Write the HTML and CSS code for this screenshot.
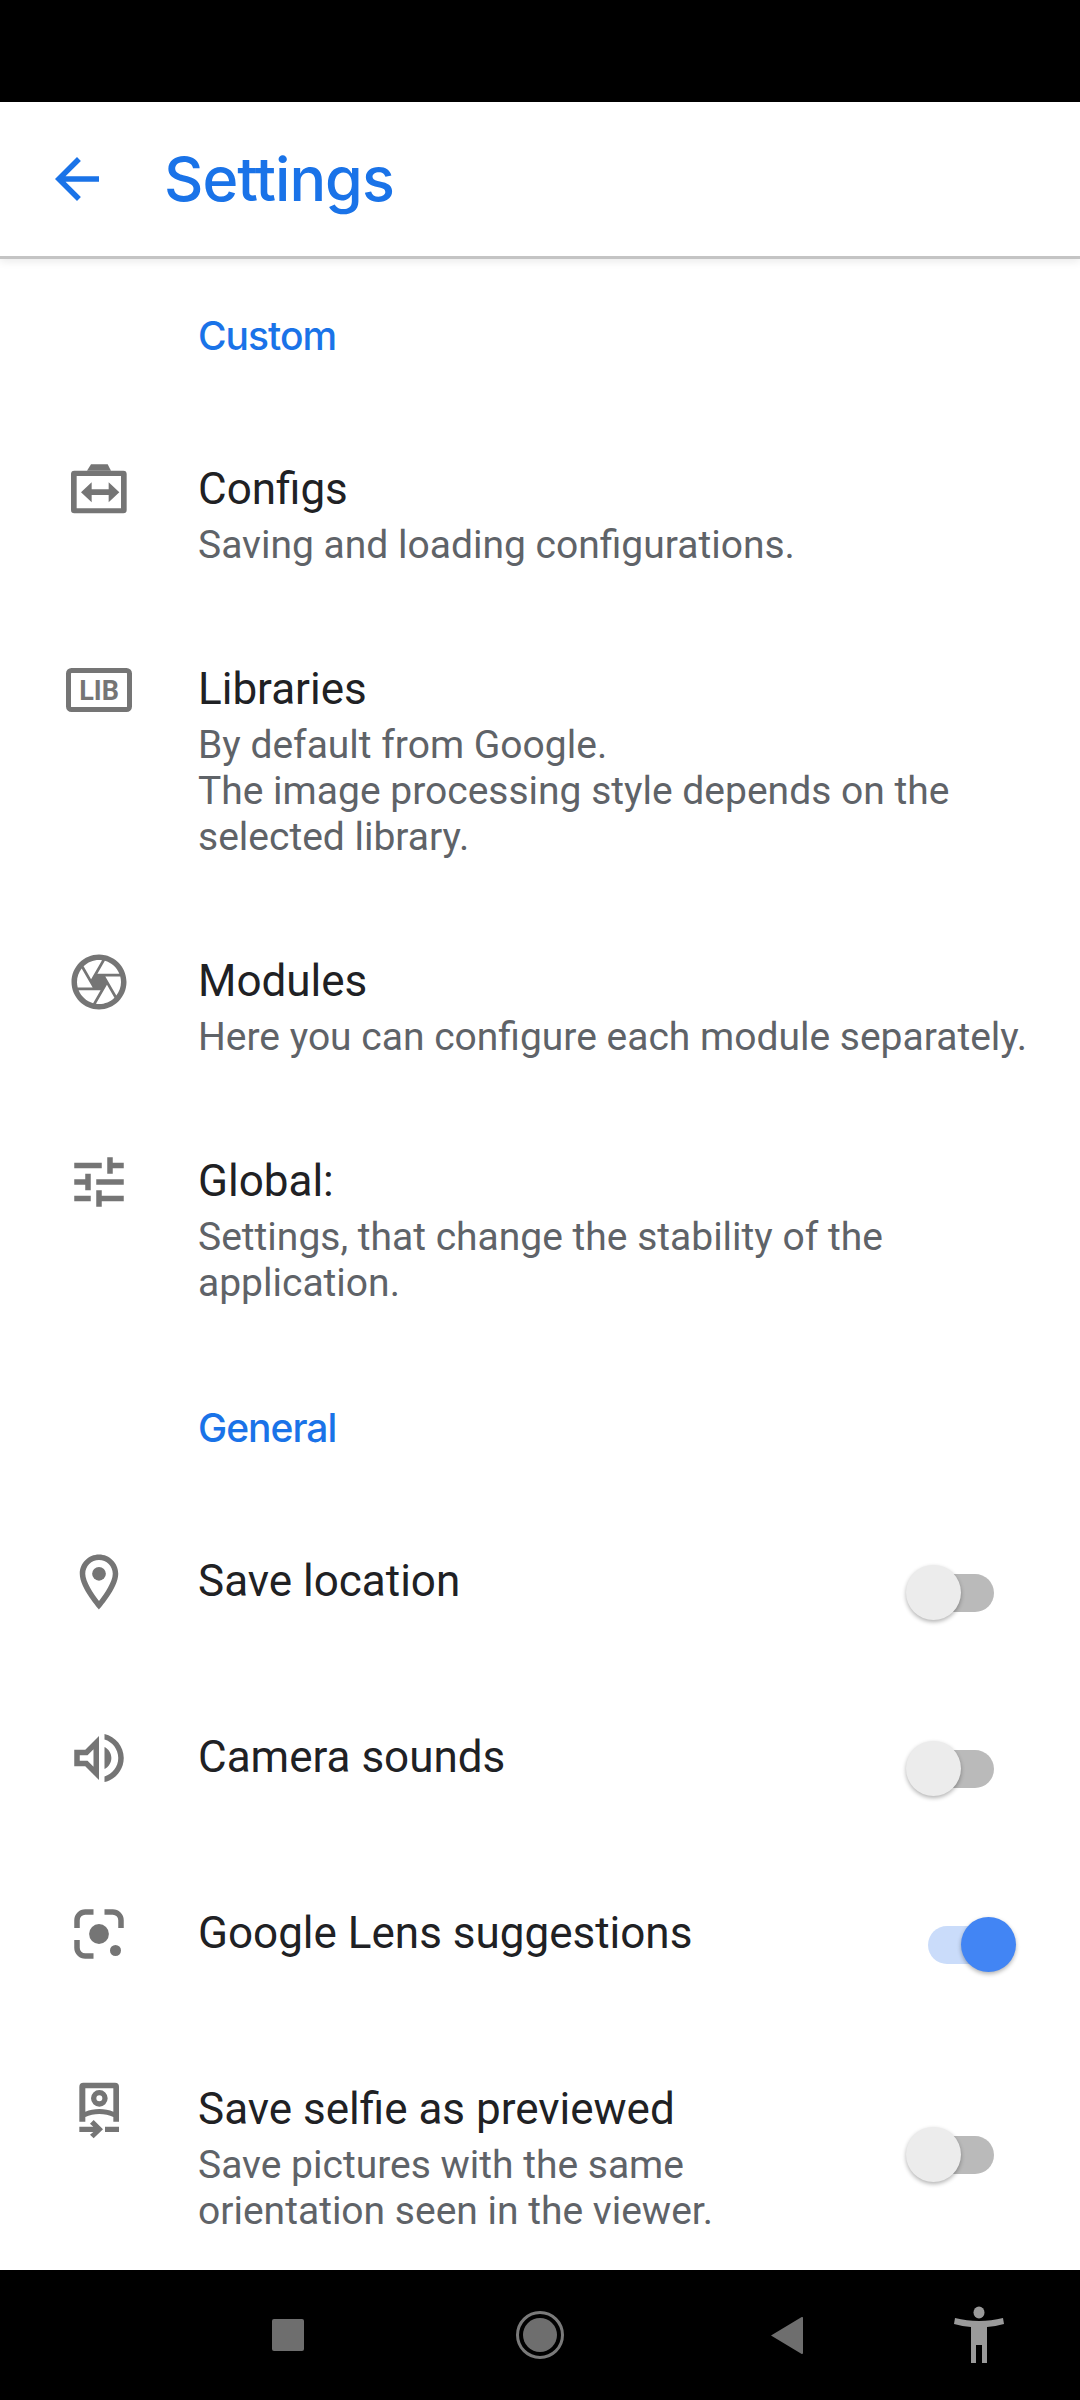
FILE: index.html
```html
<!DOCTYPE html>
<html lang="en">
  <head>
    <title>Settings</title>
    <link rel="stylesheet" href="styles.css">
  </head>
  <body>
    <div class="status-bar"></div>

    <header class="app-bar">
      <svg class="back-icon" viewBox="0 0 24 24">
        <path d="M20 11H7.83l5.59-5.59L12 4l-8 8 8 8 1.41-1.41L7.83 13H20v-2z"/>
      </svg>
      <p class="app-title">Settings</p>
    </header>

    <main class="settings">
      <p class="section-title section-custom">Custom</p>

      <!-- Configs -->
      <div class="row">
        <svg class="row-icon" viewBox="15 21 198 198">
          <path d="M78 62l12-19h50l10 19z"/>
          <path fill-rule="evenodd" d="M40 62h147a10 10 0 0 1 10 10v108a10 10 0 0 1-10 10H40a10 10 0 0 1-10-10V72a10 10 0 0 1 10-10zm7 16v97h133V78z"/>
          <path d="M60 127l32-30v21h51V97l32 30-32 30v-22H92v22z"/>
        </svg>
        <div class="row-text">
          <p class="row-title">Configs</p>
          <p class="row-sub">Saving and loading configurations.</p>
        </div>
      </div>

      <!-- Libraries -->
      <div class="row">
        <svg class="row-icon" viewBox="0 0 66 66">
          <rect x="2.500" y="13.500" width="61" height="39" rx="3" class="outline"/>
          <text x="33" y="42.500" text-anchor="middle" class="lib-text">LIB</text>
        </svg>
        <div class="row-text">
          <p class="row-title">Libraries</p>
          <p class="row-sub">By default from Google.<br>The image processing style depends on the selected library.</p>
        </div>
      </div>

      <!-- Modules -->
      <div class="row">
        <svg class="row-icon" viewBox="0 0 24 24">
          <path d="M14.25 2.26l-.08-.04-.01.02C13.46 2.09 12.74 2 12 2 6.48 2 2 6.48 2 12s4.48 10 10 10 10-4.48 10-10c0-4.75-3.31-8.72-7.75-9.74zM19.41 9h-7.99l2.71-4.7c2.4.66 4.35 2.42 5.28 4.7zM13.1 4.08L10.27 9l-1.15 2L6.4 6.3C7.84 4.88 9.82 4 12 4c.37 0 .74.03 1.1.08zM5.7 7.09L8.54 12l1.15 2H4.26C4.1 13.36 4 12.69 4 12c0-1.85.64-3.55 1.7-4.91zM4.59 15h7.98l-2.71 4.7c-2.4-.67-4.34-2.42-5.27-4.7zm6.31 4.91L14.89 13l2.72 4.7C16.16 19.12 14.18 20 12 20c-.38 0-.74-.04-1.1-.09zm7.4-3l-4-6.91h5.43c.17.64.27 1.31.27 2 0 1.85-.64 3.55-1.7 4.91z"/>
          <circle cx="12" cy="12" r="2.600"/>
        </svg>
        <div class="row-text">
          <p class="row-title">Modules</p>
          <p class="row-sub">Here you can configure each module separately.</p>
        </div>
      </div>

      <!-- Global -->
      <div class="row">
        <svg class="row-icon" viewBox="0 0 24 24">
          <path d="M3 17v2h6v-2H3zM3 5v2h10V5H3zm10 16v-2h8v-2h-8v-2h-2v6h2zM7 9v2H3v2h4v2h2V9H7zm14 4v-2H11v2h10zm-6-4h2V7h4V5h-4V3h-2v6z"/>
        </svg>
        <div class="row-text">
          <p class="row-title">Global:</p>
          <p class="row-sub">Settings, that change the stability of the application.</p>
        </div>
      </div>

      <p class="section-title section-general">General</p>

      <!-- Save location -->
      <div class="row row-switch">
        <svg class="row-icon" viewBox="0 0 24 24">
          <path d="M12 2C8.13 2 5 5.13 5 9c0 5.25 7 13 7 13s7-7.75 7-13c0-3.87-3.13-7-7-7zM7 9c0-2.76 2.24-5 5-5s5 2.24 5 5c0 2.88-2.88 7.19-5 9.88C9.92 16.21 7 11.85 7 9z"/>
          <circle cx="12" cy="9" r="2.500"/>
        </svg>
        <div class="row-text">
          <p class="row-title">Save location</p>
        </div>
        <div class="switch"><span class="track"></span><span class="thumb"></span></div>
      </div>

      <!-- Camera sounds -->
      <div class="row row-switch">
        <svg class="row-icon" viewBox="0 0 24 24">
          <path d="M3 9v6h4l5 5V4L7 9H3zm7-.17v6.34L7.83 13H5v-2h2.83L10 8.83zM16.5 12c0-1.77-1.02-3.29-2.5-4.03v8.05c1.48-.73 2.5-2.25 2.5-4.02zM14 3.23v2.06c2.89.86 5 3.54 5 6.71s-2.11 5.85-5 6.71v2.06c4.01-.91 7-4.49 7-8.77 0-4.28-2.99-7.86-7-8.77z"/>
        </svg>
        <div class="row-text">
          <p class="row-title">Camera sounds</p>
        </div>
        <div class="switch"><span class="track"></span><span class="thumb"></span></div>
      </div>

      <!-- Google Lens suggestions -->
      <div class="row row-switch">
        <svg class="row-icon" viewBox="0 0 24 24">
          <path d="M3 9.800V7a4 4 0 0 1 4-4h3v2H7a2 2 0 0 0-2 2v2.800zM21 9.800V7a4 4 0 0 0-4-4h-3v2h3a2 2 0 0 1 2 2v2.800zM3 14.200V17a4 4 0 0 0 4 4h3v-2H7a2 2 0 0 1-2-2v-2.800z"/>
          <circle cx="12" cy="12" r="3.600"/>
          <circle cx="18" cy="18" r="2"/>
        </svg>
        <div class="row-text">
          <p class="row-title">Google Lens suggestions</p>
        </div>
        <div class="switch switch-on"><span class="track"></span><span class="thumb"></span></div>
      </div>

      <!-- Save selfie as previewed -->
      <div class="row row-switch">
        <svg class="row-icon" viewBox="18 21 198 198">
          <path fill-rule="evenodd" d="M70 38h95a12 12 0 0 1 12 12v105h-17v-14c-12-6-27-9-42-9s-30 3-42 9v14H58V50a12 12 0 0 1 12-12zm6 17v70c12-5 27-8 42-8s30 3 42 8V55z"/>
          <path fill-rule="evenodd" d="M118 60a25 25 0 1 1 0 50 25 25 0 0 1 0-50zm0 16a9 9 0 1 0 0 18 9 9 0 0 0 0-18z"/>
          <path d="M58 170h42l-10-9 11-11 28 28-28 27-11-11 10-8H58zM135 170h42v16h-42z"/>
        </svg>
        <div class="row-text">
          <p class="row-title">Save selfie as previewed</p>
          <p class="row-sub">Save pictures with the same orientation seen in the viewer.</p>
        </div>
        <div class="switch switch-low"><span class="track"></span><span class="thumb"></span></div>
      </div>
    </main>

    <nav class="nav-bar">
      <span class="nav-square"></span>
      <span class="nav-home"></span>
      <svg class="nav-back" viewBox="0 0 32 37">
        <path d="M32 1v35a1 1 0 0 1-1.700.7L0 18.500 30.300.3A1 1 0 0 1 32 1z"/>
      </svg>
      <svg class="nav-person" viewBox="0 0 52 57">
        <ellipse cx="26" cy="6.500" rx="5.500" ry="6"/>
        <path d="M2 12c8 2 16 3 24 3s16-1 24-3l1 6c-6 1.500-11 2.500-17 3v36h-5V39h-6v18h-5V21c-6-.5-11-1.500-17-3z"/>
      </svg>
    </nav>
  </body>
</html>
```

FILE: styles.css
```css
* {
  box-sizing: border-box;
}
body {
  margin: 0;
  width: 1080px;
  height: 2400px;
  display: flex;
  flex-direction: column;
  background-color: white;
  font-family: Roboto, sans-serif;
  overflow: hidden;
}
p {
  margin: 0;
}
.status-bar {
  height: 102px;
  background-color: black;
}
.app-bar {
  height: 157px;
  flex: none;
  display: flex;
  align-items: center;
  padding-left: 44px;
  border-bottom: 3px solid #c4c4c4;
  box-shadow: 0 3px 8px rgba(0, 0, 0, 0.08);
}
.back-icon {
  width: 66px;
  height: 66px;
  margin-right: 54px;
  fill: #1a73e8;
}
.app-title {
  font-family: Inter, sans-serif;
  font-size: 61px;
  font-weight: 500;
  letter-spacing: -1px;
  color: #1a73e8;
}
.settings {
  flex: 1;
  overflow: hidden;
}
.section-title {
  padding-left: 198px;
  font-family: Inter, sans-serif;
  font-size: 39px;
  font-weight: 500;
  letter-spacing: -1px;
  line-height: 46px;
  color: #1a73e8;
}
.section-custom {
  margin-top: 54px;
  margin-bottom: 101px;
}
.section-general {
  margin-top: 7px;
  margin-bottom: 101px;
}
.row {
  display: flex;
  padding: 0 24px 92px 66px;
}
.row-switch {
  padding-bottom: 118px;
  padding-right: 0;
}
.row-switch:last-child {
  padding-bottom: 0;
}
.row-icon {
  flex: none;
  width: 66px;
  height: 66px;
  margin-top: -3px;
  margin-bottom: -5px;
  margin-right: 66px;
  fill: #757575;
}
.outline {
  fill: none;
  stroke: #757575;
  stroke-width: 5;
}
.lib-text {
  font-family: Roboto, sans-serif;
  font-size: 27px;
  font-weight: 700;
  fill: #757575;
}
.row-text {
  flex: 1;
}
.row-title {
  font-size: 44px;
  line-height: 58px;
  color: #202124;
}
.row-sub {
  margin-top: 4px;
  font-size: 39px;
  line-height: 46px;
  color: #5f6368;
}
.row-switch .row-text {
  flex: none;
  width: 708px;
  padding-right: 50px;
}
.switch {
  position: relative;
  flex: none;
  width: 110px;
  height: 40px;
  margin-top: 13px;
}
.switch-low {
  margin-top: 47px;
}
.track {
  position: absolute;
  left: 22px;
  top: 9px;
  width: 66px;
  height: 38px;
  border-radius: 19px;
  background-color: #bababa;
}
.thumb {
  position: absolute;
  left: 0;
  top: 0;
  width: 55px;
  height: 55px;
  border-radius: 50%;
  background-color: #ececec;
  box-shadow: 0 2px 4px rgba(0, 0, 0, 0.3);
}
.switch-on .track {
  background-color: #cadcfa;
}
.switch-on .thumb {
  left: 55px;
  background-color: #4285f4;
}
.nav-bar {
  height: 130px;
  flex: none;
  position: relative;
  background-color: black;
}
.nav-square {
  position: absolute;
  left: 272px;
  top: 49px;
  width: 32px;
  height: 32px;
  border-radius: 2px;
  background-color: #6e6e6e;
}
.nav-home {
  position: absolute;
  left: 516px;
  top: 41px;
  width: 48px;
  height: 48px;
  padding: 4px;
  border: 3px solid #7a7a7a;
  border-radius: 50%;
  background-color: #6e6e6e;
  background-clip: content-box;
}
.nav-back {
  position: absolute;
  left: 771px;
  top: 47px;
  width: 32px;
  height: 37px;
  fill: #6e6e6e;
}
.nav-person {
  position: absolute;
  left: 953px;
  top: 36px;
  width: 52px;
  height: 57px;
  fill: #9a9a9a;
}
```
